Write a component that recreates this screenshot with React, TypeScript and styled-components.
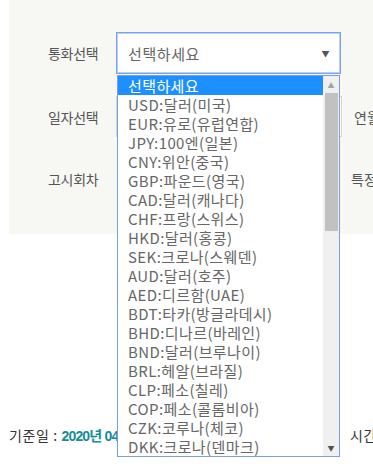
import React from 'react';
import styled, { createGlobalStyle } from 'styled-components';

const GlobalStyle = createGlobalStyle`
  html, body {
    margin: 0;
    padding: 0;
    background: #fff;
    overflow: hidden;
    font-family: "Noto Sans CJK KR", "Noto Sans", sans-serif;
  }
`;

const Page = styled.div`
  width: 373px;
  height: 467px;
  padding-left: 9px;
  box-sizing: border-box;
  overflow: hidden;
`;

const Panel = styled.div`
  width: 420px;
  background: #f7f7f3;
  padding: 32px 0 35px 39px;
  box-sizing: border-box;
  display: flex;
  flex-direction: column;
  gap: 22px;
`;

const Row = styled.div<{ $h: number }>`
  display: grid;
  grid-template-columns: 68px 1fr;
  align-items: center;
  height: ${p => p.$h}px;
`;

const Label = styled.div`
  font-size: 14px;
  color: #555;
  letter-spacing: -0.3px;
`;

const Field = styled.div`
  display: flex;
  align-items: center;
  height: 100%;
`;

const SelectWrap = styled.div`
  position: relative;
  width: 225px;
  height: 42px;
`;

const SelectBox = styled.div`
  height: 100%;
  box-sizing: border-box;
  background: #fff;
  border: 1px solid #79a4ea;
  box-shadow: inset 0 0 0 1px #b9d0f6;
  display: flex;
  align-items: center;
  justify-content: space-between;
  padding: 0 10px 0 11px;
  font-size: 15px;
  color: #666;
  letter-spacing: 0.6px;
`;

const Arrow = styled.span`
  font-size: 8px;
  color: #555;
`;

const Dropdown = styled.div`
  position: absolute;
  top: 43px;
  left: 1px;
  width: 223px;
  height: 382px;
  box-sizing: border-box;
  background: #fff;
  border: 1px solid #7b9fe0;
  display: flex;
  z-index: 10;
`;

const Options = styled.ul`
  list-style: none;
  margin: 0;
  padding: 0;
  flex: 1;
  overflow: hidden;
`;

const Option = styled.li<{ $active?: boolean }>`
  height: 19px;
  line-height: 19px;
  padding-left: 10px;
  font-size: 15px;
  color: ${p => (p.$active ? '#fff' : '#666')};
  background: ${p => (p.$active ? '#1e8fff' : 'transparent')};
  white-space: nowrap;
  letter-spacing: 0.4px;
`;

const ScrollBar = styled.div`
  width: 16px;
  background: #f0f0f0;
  display: flex;
  flex-direction: column;
  align-items: center;
`;

const ScrollBtn = styled.div<{ $dark?: boolean }>`
  height: 17px;
  width: 100%;
  display: flex;
  align-items: center;
  justify-content: center;
  font-size: 7px;
  color: ${p => (p.$dark ? '#505050' : '#a3a3a3')};
`;

const Thumb = styled.div`
  width: 13px;
  height: 138px;
  background: #c1c1c1;
`;

const Spacer = styled.div`
  flex: 1;
`;

const InputBox = styled.div`
  width: 226px;
  height: 41px;
  box-sizing: border-box;
  background: #fff;
  border: 1px solid #d4d4d4;
`;

const OptText = styled.span`
  font-size: 14px;
  color: #555;
  margin-left: 12px;
  white-space: nowrap;
`;

const Radio = styled.span<{ $offset: number }>`
  width: 12px;
  height: 12px;
  margin-left: ${p => p.$offset}px;
  border-radius: 50%;
  border: 1px solid #c8c8c8;
  background: #fff;
  flex-shrink: 0;
`;

const InfoRow = styled.div`
  display: flex;
  align-items: center;
  margin-top: 190px;
  height: 22px;
  font-size: 14px;
  color: #333;
  white-space: nowrap;
`;

const InfoCell = styled.div<{ $w?: number }>`
  width: ${p => (p.$w ? `${p.$w}px` : 'auto')};
  flex-shrink: 0;
  overflow: hidden;
  letter-spacing: 0.6px;
`;

const DateValue = styled.b`
  color: #168c98;
  font-family: "Liberation Sans", "Noto Sans CJK KR", sans-serif;
  font-size: 14px;
  font-weight: 700;
  letter-spacing: -0.8px;
`;

const TableHead = styled.div`
  display: grid;
  grid-template-columns: 136px 1fr;
  gap: 1px;
  margin-top: 21px;
`;

const HeadCell = styled.div`
  border-top: 2px solid #333;
  height: 20px;
`;

const currencies = [
  'USD:달러(미국)',
  'EUR:유로(유럽연합)',
  'JPY:100엔(일본)',
  'CNY:위안(중국)',
  'GBP:파운드(영국)',
  'CAD:달러(캐나다)',
  'CHF:프랑(스위스)',
  'HKD:달러(홍콩)',
  'SEK:크로나(스웨덴)',
  'AUD:달러(호주)',
  'AED:디르함(UAE)',
  'BDT:타카(방글라데시)',
  'BHD:디나르(바레인)',
  'BND:달러(브루나이)',
  'BRL:헤알(브라질)',
  'CLP:페소(칠레)',
  'COP:페소(콜롬비아)',
  'CZK:코루나(체코)',
  'DKK:크로나(덴마크)',
];

const App = () => {
  return (
    <>
      <GlobalStyle />
      <Page>
        <Panel>
          <Row $h={42}>
            <Label>통화선택</Label>
            <Field>
              <SelectWrap>
                <SelectBox>
                  <span>선택하세요</span>
                  <Arrow>▼</Arrow>
                </SelectBox>
                <Dropdown>
                  <Options>
                    <Option $active>선택하세요</Option>
                    {currencies.map(c => (
                      <Option key={c}>{c}</Option>
                    ))}
                  </Options>
                  <ScrollBar>
                    <ScrollBtn>▲</ScrollBtn>
                    <Thumb />
                    <Spacer />
                    <ScrollBtn $dark>▼</ScrollBtn>
                  </ScrollBar>
                </Dropdown>
              </SelectWrap>
            </Field>
          </Row>
          <Row $h={41}>
            <Label>일자선택</Label>
            <Field>
              <InputBox />
              <OptText>연월일</OptText>
            </Field>
          </Row>
          <Row $h={40}>
            <Label>고시회차</Label>
            <Field>
              <Radio $offset={209} />
              <OptText>특정회차</OptText>
            </Field>
          </Row>
        </Panel>
        <InfoRow>
          <InfoCell $w={341}>
            기준일 : <DateValue>2020년 04월 03일</DateValue>
          </InfoCell>
          <InfoCell>시간 : 09:00</InfoCell>
        </InfoRow>
        <TableHead>
          <HeadCell />
          <HeadCell />
        </TableHead>
      </Page>
    </>
  );
};

export default App;
